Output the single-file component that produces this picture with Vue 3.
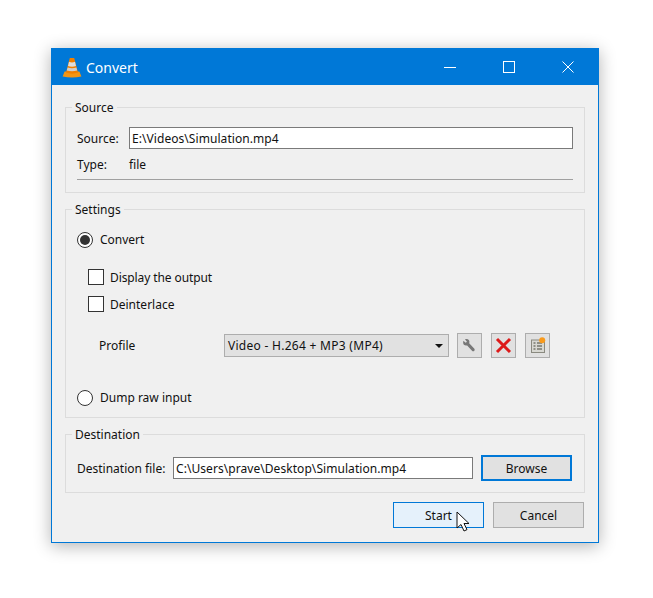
<script setup>
const cursor = 'M1 1 L1 17 L5 13.5 L8 20 L11 18.6 L8 12.5 L13 12.5 Z'
</script>

<template>
  <div class="page">
    <div class="window">
      <header class="titlebar">
        <svg class="cone" width="20" height="21" viewBox="0 0 20 21">
          <path d="M2.6 14.5 L0.6 19.6 Q10 21.4 19.4 19.6 L17.4 14.5 Z" fill="#f29514" />
          <path d="M7.8 1 H12.2 L16 15.5 Q10 17.8 4 15.5 Z" fill="#f07f00" />
          <path d="M7 4.8 Q10 6 13 4.8 L14 9 Q10 10.4 6 9 Z" fill="#dedede" />
          <path d="M5.6 10.5 Q10 12 14.4 10.5 L15.2 13.4 Q10 15 4.8 13.4 Z" fill="#cfcfcf" />
        </svg>
        <span class="title">Convert</span>
        <div class="controls">
          <span class="ctl"><svg width="12" height="12" viewBox="0 0 12 12"><path d="M0 6.5 H12" stroke="#fff" fill="none" /></svg></span>
          <span class="ctl"><svg width="12" height="12" viewBox="0 0 12 12"><rect x=".5" y=".5" width="11" height="11" stroke="#fff" fill="none" /></svg></span>
          <span class="ctl"><svg width="12" height="12" viewBox="0 0 12 12"><path d="M.5 .5 L11.5 11.5 M11.5 .5 L.5 11.5" stroke="#fff" fill="none" /></svg></span>
        </div>
      </header>

      <main class="body">
        <section class="group group-source">
          <span class="legend">Source</span>
          <div class="row">
            <label class="lbl lbl-source">Source:</label>
            <div class="input grow">E:\Videos\Simulation.mp4</div>
          </div>
          <div class="row type-row">
            <span class="lbl lbl-source">Type:</span>
            <span class="lbl">file</span>
          </div>
          <div class="sep"></div>
        </section>

        <section class="group group-settings">
          <span class="legend">Settings</span>
          <div class="check-row">
            <span class="radio on"></span><span>Convert</span>
          </div>
          <div class="check-row sub first"><span class="check"></span><span class="lbl tight">Display the output</span></div>
          <div class="check-row sub second"><span class="check"></span><span class="lbl">Deinterlace</span></div>
          <div class="profile">
            <span class="profile-label">Profile</span>
            <div class="combo">
              <span>Video - H.264 + MP3 (MP4)</span>
              <svg width="8" height="4" viewBox="0 0 8 4"><path d="M0 0 H8 L4 4 Z" fill="#111" /></svg>
            </div>
            <span class="tool">
              <svg width="15" height="15" viewBox="1.5 0 19 19">
                <path d="M3.2 3.5 L6.2 6 L7.8 4.6 L5.2 1.7 Q8.6 0.6 10.4 3 Q11.4 4.8 10.6 6.6 L17.2 13.6 Q18.1 15 17 16.4 Q15.4 17.4 14.2 16.2 L8 9.4 Q5.6 10 3.8 8.6 Q2.3 6.6 3.2 3.5 Z" fill="#777" />
              </svg>
            </span>
            <span class="tool">
              <svg width="17" height="17" viewBox="0 0 17 17"><path d="M2 2 L15 15 M15 2 L2 15" stroke="#dd1a1a" stroke-width="3" fill="none" /></svg>
            </span>
            <span class="tool">
              <svg width="20" height="20" viewBox="0 0 20 20">
                <rect x="3.5" y="4" width="13" height="12.5" fill="#d8d8d2" stroke="#8a8a80" />
                <path d="M5.5 7 H7.5 M5.5 10 H7.5 M5.5 13 H7.5 M9 7 H14 M9 10 H14 M9 13 H14" stroke="#77776e" stroke-width="1.3" fill="none" />
                <circle cx="14.2" cy="4.2" r="3" fill="#f89a1c" />
              </svg>
            </span>
          </div>
          <div class="check-row dump"><span class="radio"></span><span>Dump raw input</span></div>
        </section>

        <section class="group group-dest">
          <span class="legend">Destination</span>
          <div class="row dest-row">
            <label class="lbl lbl-dest">Destination file:</label>
            <div class="input dest-input">C:\Users\prave\Desktop\Simulation.mp4</div>
            <button class="btn browse">Browse</button>
          </div>
        </section>

        <footer class="actions">
          <button class="btn start">Start
            <svg class="pointer" width="15" height="22" viewBox="0 0 15 22"><path :d="cursor" fill="#fff" stroke="#111" stroke-width="1" /></svg>
          </button>
          <button class="btn cancel">Cancel</button>
        </footer>
      </main>
    </div>
  </div>
</template>

<style>
html, body { margin: 0; background: #fff; }
</style>

<style scoped>
.page {
  box-sizing: border-box;
  height: 598px;
  padding: 48px 0 0 51px;
  overflow: hidden;
}
.window {
  box-sizing: border-box;
  width: 548px;
  height: 495px;
  border: 1px solid #0078d7;
  background: #f0f0f0;
  box-shadow: 0 3px 16px rgba(0, 0, 0, .3);
  font: 12px/16px "Noto Sans", sans-serif;
  color: #111;
  display: flex;
  flex-direction: column;
}
.titlebar {
  height: 36px;
  flex: none;
  background: #0078d7;
  display: flex;
  align-items: center;
  padding: 0 1px 0 10px;
  color: #fff;
}
.cone { flex: none; }
.title { margin-left: 4px; font-size: 14px; padding-top: 2px; }
.controls { margin-left: auto; display: flex; }
.ctl { width: 59px; height: 36px; display: flex; align-items: center; justify-content: center; }
.body { flex: 1; padding: 22px 13px 0; display: flex; flex-direction: column; }
.group { position: relative; border: 1px solid #dcdcdc; box-sizing: border-box; padding: 0 11px; }
.legend { position: absolute; top: -8px; left: 6px; padding: 0 3px; background: #f0f0f0; }
.group-source { height: 86px; padding-top: 19px; }
.group-settings { height: 209px; margin-top: 16px; padding-top: 22px; }
.group-dest { height: 59px; margin-top: 16px; padding-top: 20px; }
.row { display: flex; align-items: center; }
.lbl { padding-top: 2px; }
.lbl-source { width: 52px; flex: none; }
.grow { flex: 1; }
.input { box-sizing: border-box; height: 22px; border: 1px solid #7a7a7a; background: #fff; padding: 1px 2px 0; line-height: 20px; white-space: nowrap; letter-spacing: .06px; }
.type-row { margin-top: 6px; }
.sep { height: 1px; background: #a0a0a0; margin-top: 6px; }
.check-row { display: flex; align-items: center; gap: 7px; height: 16px; }
.radio { width: 16px; height: 16px; box-sizing: border-box; border-radius: 50%; border: 1px solid #333; background: #fff; position: relative; flex: none; }
.radio.on::after { content: ""; position: absolute; inset: 2px; border-radius: 50%; background: #333; }
.check { width: 16px; height: 16px; box-sizing: border-box; border: 1px solid #333; background: #fff; flex: none; }
.sub { margin-left: 11px; gap: 6px; }
.tight { letter-spacing: -.1px; }
.first { margin-top: 21px; }
.second { margin-top: 11px; }
.profile { display: flex; align-items: center; margin-top: 21px; height: 25px; }
.profile-label { margin-left: 22px; width: 125px; flex: none; }
.combo { box-sizing: border-box; width: 225px; height: 23px; border: 1px solid #adadad; background: #e1e1e1; display: flex; align-items: center; justify-content: space-between; padding: 0 5px 0 3px; margin-right: 8px; letter-spacing: .28px; }
.tool { box-sizing: border-box; width: 25px; height: 25px; border: 1px solid #adadad; background: #e1e1e1; display: flex; align-items: center; justify-content: center; margin-right: 9px; }
.dump { margin-top: 32px; }
.lbl-dest { width: 96px; flex: none; }
.dest-input { width: 300px; flex: none; }
.btn { box-sizing: border-box; font: inherit; color: inherit; padding: 2px 0 0; background: #e1e1e1; border: 1px solid #adadad; height: 26px; width: 91px; }
.browse { margin-left: 8px; border: 2px solid #0078d7; }
.actions { display: flex; justify-content: flex-end; gap: 9px; margin: 9px 1px 0 0; }
.start { position: relative; border-color: #0078d7; background: #e5f1fb; }
.pointer { position: absolute; left: 62px; top: 8px; }
</style>
